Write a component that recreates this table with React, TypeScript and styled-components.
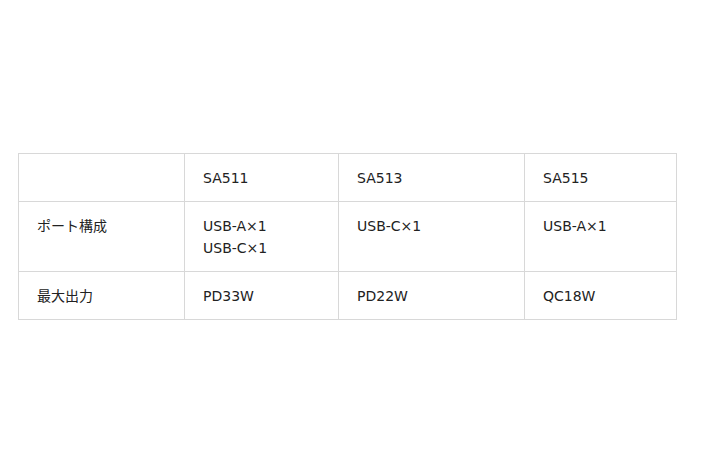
import React from "react";
import styled, { createGlobalStyle } from "styled-components";

const GlobalStyle = createGlobalStyle`
  html, body {
    margin: 0;
    padding: 0;
    background: #ffffff;
  }
  body {
    font-family: "DejaVu Sans", "Noto Sans CJK JP", sans-serif;
    color: #222222;
  }
`;

type Row = {
  label: string;
  cells: string[][];
};

const models = ["SA511", "SA513", "SA515"];

const rows: Row[] = [
  { label: "ポート構成", cells: [["USB-A×1", "USB-C×1"], ["USB-C×1"], ["USB-A×1"]] },
  { label: "最大出力", cells: [["PD33W"], ["PD22W"], ["QC18W"]] },
];

const colWidths = [166, 154, 186, 152];

const Page = styled.div`
  width: 710px;
  height: 474px;
  padding: 153px 0 0 18px;
  box-sizing: border-box;
`;

const Table = styled.table`
  border-collapse: collapse;
  table-layout: fixed;
  width: 659px;
  font-size: 14px;
  line-height: 22px;
`;

const Cell = styled.td`
  border: 1px solid #d8d8d8;
  padding: 13px 18px 12px;
  vertical-align: top;
  text-align: left;
  font-weight: normal;
`;

const Line = styled.div`
  white-space: nowrap;
`;

export default function App() {
  return (
    <Page>
      <GlobalStyle />
      <Table>
        <colgroup>
          {colWidths.map((w, i) => (
            <col key={i} style={{ width: w }} />
          ))}
        </colgroup>
        <tbody>
          <tr>
            <Cell />
            {models.map((m) => (
              <Cell key={m}>{m}</Cell>
            ))}
          </tr>
          {rows.map((row) => (
            <tr key={row.label}>
              <Cell>{row.label}</Cell>
              {row.cells.map((lines, i) => (
                <Cell key={i}>
                  {lines.map((l) => (
                    <Line key={l}>{l}</Line>
                  ))}
                </Cell>
              ))}
            </tr>
          ))}
        </tbody>
      </Table>
    </Page>
  );
}
